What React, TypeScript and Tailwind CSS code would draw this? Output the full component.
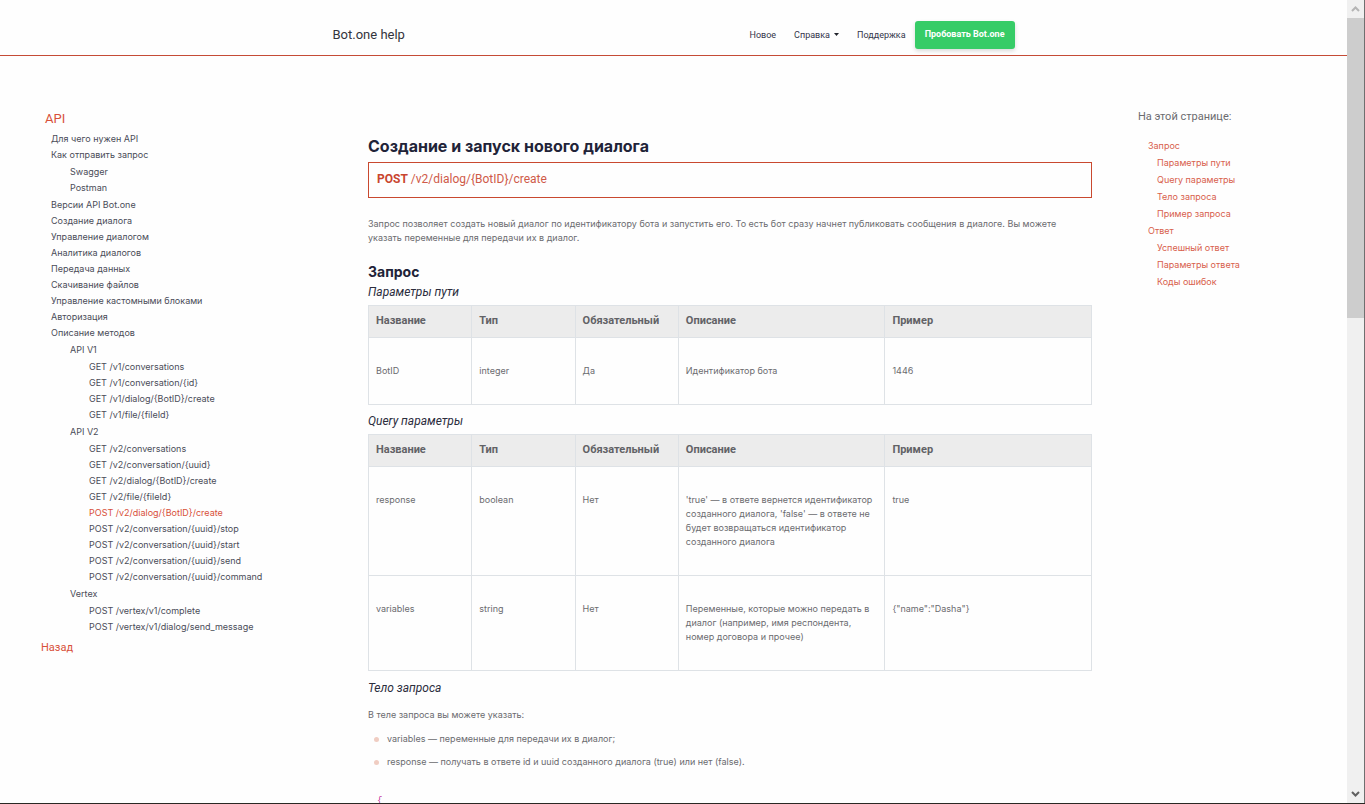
import React from "react";

type NavNode = { label: string; active?: boolean; children?: NavNode[] };

const apiNav: NavNode[] = [
  { label: "Для чего нужен API" },
  { label: "Как отправить запрос", children: [{ label: "Swagger" }, { label: "Postman" }] },
  { label: "Версии API Bot.one" },
  { label: "Создание диалога" },
  { label: "Управление диалогом" },
  { label: "Аналитика диалогов" },
  { label: "Передача данных" },
  { label: "Скачивание файлов" },
  { label: "Управление кастомными блоками" },
  { label: "Авторизация" },
  {
    label: "Описание методов",
    children: [
      {
        label: "API V1",
        children: [
          { label: "GET /v1/conversations" },
          { label: "GET /v1/conversation/{id}" },
          { label: "GET /v1/dialog/{BotID}/create" },
          { label: "GET /v1/file/{fileId}" },
        ],
      },
      {
        label: "API V2",
        children: [
          { label: "GET /v2/conversations" },
          { label: "GET /v2/conversation/{uuid}" },
          { label: "GET /v2/dialog/{BotID}/create" },
          { label: "GET /v2/file/{fileId}" },
          { label: "POST /v2/dialog/{BotID}/create", active: true },
          { label: "POST /v2/conversation/{uuid}/stop" },
          { label: "POST /v2/conversation/{uuid}/start" },
          { label: "POST /v2/conversation/{uuid}/send" },
          { label: "POST /v2/conversation/{uuid}/command" },
        ],
      },
      {
        label: "Vertex",
        children: [
          { label: "POST /vertex/v1/complete" },
          { label: "POST /vertex/v1/dialog/send_message" },
        ],
      },
    ],
  },
];

const tocNav: NavNode[] = [
  {
    label: "Запрос",
    children: [
      { label: "Параметры пути" },
      { label: "Query параметры" },
      { label: "Тело запроса" },
      { label: "Пример запроса" },
    ],
  },
  {
    label: "Ответ",
    children: [{ label: "Успешный ответ" }, { label: "Параметры ответа" }, { label: "Коды ошибок" }],
  },
];

function NavItems({ items }: { items: NavNode[] }) {
  return (
    <>
      {items.map((item) => (
        <li key={item.label}>
          <a href="#" className={item.active ? "block text-[#d8503a]" : "block text-[#4a4c58]"}>
            {item.label}
          </a>
          {item.children && (
            <ul className="py-px pl-[19px]">
              <NavItems items={item.children} />
            </ul>
          )}
        </li>
      ))}
    </>
  );
}

function Toc({ items }: { items: NavNode[] }) {
  return (
    <>
      {items.map((item) => (
        <li key={item.label}>
          <a href="#" className="block">
            {item.label}
          </a>
          {item.children && (
            <ul className="pl-[9px]">
              <Toc items={item.children} />
            </ul>
          )}
        </li>
      ))}
    </>
  );
}

const columns = ["Название", "Тип", "Обязательный", "Описание", "Пример"];

function ParamTable({ rows }: { rows: string[][] }) {
  return (
    <table className="w-full table-fixed border-collapse text-left text-[#6b6b6f]">
      <thead className="bg-[#ececec] font-['Roboto',sans-serif] text-[11px] leading-[15px] text-[#626266]">
        <tr>
          {columns.map((name, i) => (
            <th
              key={name}
              className={
                i < 3
                  ? "w-1/7 border border-[#dee2e6] px-[7px] pt-[7px] pb-[9px] font-bold"
                  : "w-2/7 border border-[#dee2e6] px-[7px] pt-[7px] pb-[9px] font-bold"
              }
            >
              {name}
            </th>
          ))}
        </tr>
      </thead>
      <tbody>
        {rows.map((row) => (
          <tr key={row[0]}>
            {row.map((cell, i) => (
              <td key={i} className="border border-[#dee2e6] px-[7px] py-[26px] align-top">
                {cell}
              </td>
            ))}
          </tr>
        ))}
      </tbody>
    </table>
  );
}

function SubHeading({ children }: { children: React.ReactNode }) {
  return (
    <h3 className="font-['Roboto',sans-serif] text-[12px] leading-4 text-[#2b2d3d] italic">
      {children}
    </h3>
  );
}

function ScrollBar() {
  return (
    <div className="flex w-[18px] shrink-0 flex-col border-r border-[#6f6f6f] bg-[#f0f0f0]">
      <button aria-label="Вверх" className="flex h-[18px] items-center justify-center">
        <svg width="9" height="8" viewBox="0 0 9 8" fill="none" stroke="#b4b4b4" strokeWidth="2">
          <path d="M1 6 4.500 2.500 8 6" />
        </svg>
      </button>
      <div className="h-[300px] bg-[#cdcdcd]" />
      <button aria-label="Вниз" className="mt-auto flex h-[18px] items-center justify-center">
        <svg width="9" height="8" viewBox="0 0 9 8" fill="none" stroke="#606060" strokeWidth="2">
          <path d="M1 2 4.500 5.500 8 2" />
        </svg>
      </button>
    </div>
  );
}

export default function App() {
  return (
    <div className="flex h-screen overflow-hidden border-b border-[#2a2824] bg-[#fefefe] font-['Inter','Noto_Sans',sans-serif] text-[9px] leading-[14px] text-[#6b6b6f]">
      <div className="min-w-0 flex-1 overflow-hidden">
        <header className="border-b border-[#c54b36] font-['Roboto',sans-serif]">
          <div className="mx-auto flex h-[55px] max-w-[682px] items-center justify-between pt-[14px]">
            <a href="#" className="text-[13px] leading-5 text-[#33343c]">
              Bot.one help
            </a>
            <nav className="flex items-center text-[#33354a]">
              <a href="#" className="mr-[18px]">Новое</a>
              <button className="mr-[18px] flex items-center gap-1">
                Справка
                <svg width="5" height="3" viewBox="0 0 5 3" fill="#22242c">
                  <path d="M0 0h5L2.500 3z" />
                </svg>
              </button>
              <a href="#" className="mr-[9px]">Поддержка</a>
              <a
                href="#"
                className="rounded-[3px] bg-[#36cc67] px-[10px] pt-[6px] pb-2 font-bold text-white shadow-[0_2px_4px_rgba(0,0,0,0.15)]"
              >
                Пробовать Bot.one
              </a>
            </nav>
          </div>
        </header>

        <div className="grid grid-cols-[368px_minmax(0,1fr)_255px]">
          <aside className="pt-[54px] pl-[41px]">
            <a
              href="#"
              className="block pl-1 font-['Roboto',sans-serif] text-[13px] leading-[17px] text-[#d8503a]"
            >
              API
            </a>
            <ul className="pt-1 pl-[10px] leading-4">
              <NavItems items={apiNav} />
            </ul>
            <a
              href="#"
              className="mt-[3px] block font-['Roboto',sans-serif] text-[11px] leading-4 text-[#d8503a]"
            >
              Назад
            </a>
          </aside>

          <main className="pt-20">
            <h1 className="text-[16px] leading-5 font-bold text-[#212338]">
              Создание и запуск нового диалога
            </h1>
            <div className="mt-[6px] border border-[#c9492f] px-2 pt-2 pb-[10px] font-['Roboto',sans-serif] text-[12px] leading-4 text-[#cf5a49]">
              <b className="text-[#c9452f]">POST</b> /v2/dialog/{"{BotID}"}/create
            </div>
            <p className="mt-[19px]">
              Запрос позволяет создать новый диалог по идентификатору бота и запустить его. То есть бот
              сразу начнет публиковать сообщения в диалоге. Вы можете указать переменные для передачи их
              в диалог.
            </p>
            <h2 className="mt-[17px] mb-[2px] text-[14px] leading-5 font-bold text-[#212338]">Запрос</h2>
            <SubHeading>Параметры пути</SubHeading>
            <div className="mt-[5px] mb-[8px]">
              <ParamTable rows={[["BotID", "integer", "Да", "Идентификатор бота", "1446"]]} />
            </div>
            <SubHeading>Query параметры</SubHeading>
            <div className="mt-[5px] mb-[9px]">
              <ParamTable
                rows={[
                  [
                    "response",
                    "boolean",
                    "Нет",
                    "'true' — в ответе вернется идентификатор созданного диалога, 'false' — в ответе не будет возвращаться идентификатор созданного диалога",
                    "true",
                  ],
                  [
                    "variables",
                    "string",
                    "Нет",
                    "Переменные, которые можно передать в диалог (например, имя респондента, номер договора и прочее)",
                    '{"name":"Dasha"}',
                  ],
                ]}
              />
            </div>
            <SubHeading>Тело запроса</SubHeading>
            <p className="mt-3">В теле запроса вы можете указать:</p>
            <ul className="mt-[10px] flex flex-col gap-[9px] pl-[6px]">
              {[
                "variables — переменные для передачи их в диалог;",
                "response — получать в ответе id и uuid созданного диалога (true) или нет (false).",
              ].map((text) => (
                <li key={text} className="flex items-center gap-2">
                  <span className="size-[5px] rounded-full bg-[#f0cdc2]" />
                  {text}
                </li>
              ))}
            </ul>
            <pre className="mt-[25px] pl-[9px] font-['Liberation_Mono',monospace] text-[9px] leading-[14px] text-[#c0309a]">
              {"{"}
            </pre>
          </main>

          <aside className="pt-[53px] pl-[46px]">
            <h2 className="font-['Roboto',sans-serif] text-[11px] leading-4">На этой странице:</h2>
            <ul className="pt-3 pl-[10px] leading-[17px] text-[#d8604c]">
              <Toc items={tocNav} />
            </ul>
          </aside>
        </div>
      </div>
      <ScrollBar />
    </div>
  );
}
